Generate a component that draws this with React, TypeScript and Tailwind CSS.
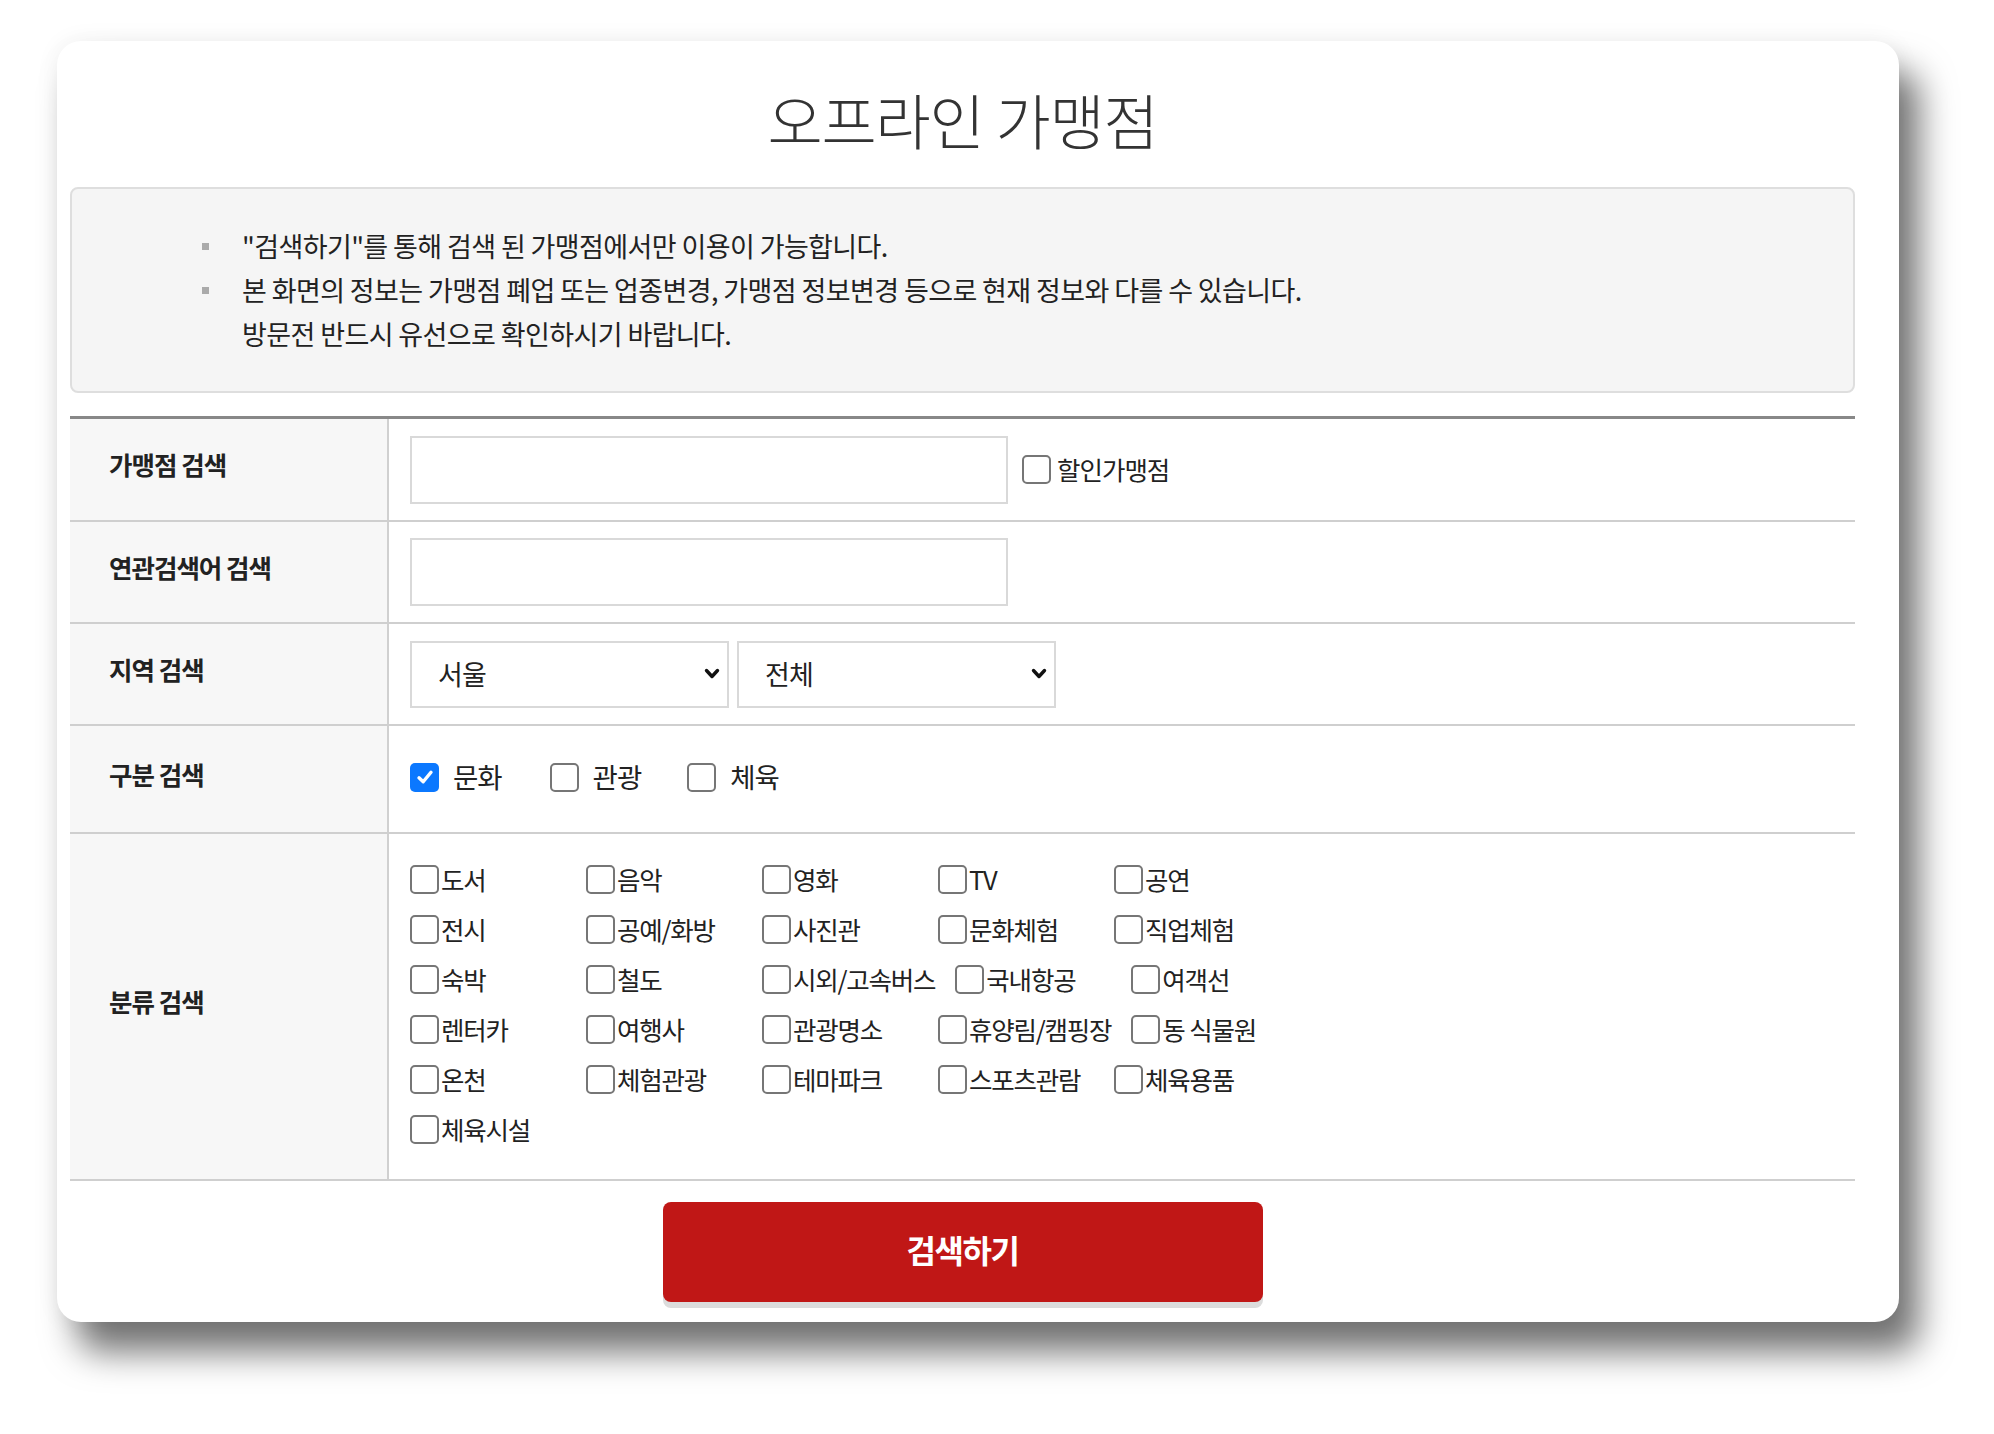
import React from "react";

const FONT = '"Noto Sans CJK KR", "Noto Sans", sans-serif';

function Box({ checked }: { checked?: boolean }) {
  if (checked) {
    return (
      <span className="inline-flex w-[29px] h-[29px] shrink-0 items-center justify-center rounded-[5px] bg-[#0b78ff]">
        <svg viewBox="0 0 20 20" className="w-[20px] h-[20px]">
          <path d="M4 10.8 L8.2 14.8 L16 5.2" fill="none" stroke="white" strokeWidth="3.4" strokeLinecap="round" strokeLinejoin="round" />
        </svg>
      </span>
    );
  }
  return <span className="inline-block w-[29px] h-[29px] shrink-0 rounded-[5px] border-2 border-[#767676] bg-white" />;
}

function Chevron() {
  return (
    <svg viewBox="0 0 16 12" className="w-[16px] h-[12px]">
      <path d="M2.5 2.5 L8 8.5 L13.5 2.5" fill="none" stroke="#111" strokeWidth="3.4" strokeLinecap="round" strokeLinejoin="round" />
    </svg>
  );
}

function Select({ value }: { value: string }) {
  return (
    <div className="w-[319px] h-[67px] border-2 border-[#d9d9d9] bg-white flex items-center justify-between pl-[26px] pr-[7px]">
      <span className="text-[27px] text-[#222] tracking-[-0.8px]">{value}</span>
      <Chevron />
    </div>
  );
}

function Label({ children }: { children: React.ReactNode }) {
  return (
    <div className="w-[319px] shrink-0 bg-[#f7f7f7] border-r-2 border-[#d0d0d0] flex items-center pl-[39px] pb-[10px]">
      <span className="text-[25.5px] font-bold text-[#222] tracking-[-1px]">{children}</span>
    </div>
  );
}

const grid: string[][] = [
  ["도서", "음악", "영화", "TV", "공연"],
  ["전시", "공예/화방", "사진관", "문화체험", "직업체험"],
  ["숙박", "철도", "시외/고속버스", "국내항공", "여객선"],
  ["렌터카", "여행사", "관광명소", "휴양림/캠핑장", "동 식물원"],
  ["온천", "체험관광", "테마파크", "스포츠관람", "체육용품"],
  ["체육시설"],
];

export default function App() {
  return (
    <div className="min-h-screen bg-white pt-[41px] pl-[57px] pb-[100px]" style={{ fontFamily: FONT }}>
      <div className="w-[1842px] bg-white rounded-[24px] pl-[13px] pr-[44px] pb-[20px] shadow-[20px_30px_35px_rgba(0,0,0,0.55),0_0_25px_rgba(0,0,0,0.06)]">
        <div className="h-[146px] flex items-center justify-center pt-[10px]">
          <h1 className="text-[60px] font-light text-[#333] tracking-[-1.2px] leading-none">오프라인 가맹점</h1>
        </div>

        <div className="h-[206px] bg-[#f5f5f5] border-2 border-[#dedede] rounded-[8px] flex flex-col justify-center pl-[130px]">
          <div className="flex items-center h-[44px]">
            <span className="w-[7px] h-[7px] bg-[#aaaaaa] mr-[33px]" />
            <span className="text-[27px] text-[#222] tracking-[-0.6px]">"검색하기"를 통해 검색 된 가맹점에서만 이용이 가능합니다.</span>
          </div>
          <div className="flex items-center h-[44px]">
            <span className="w-[7px] h-[7px] bg-[#aaaaaa] mr-[33px]" />
            <span className="text-[27px] text-[#222] tracking-[-0.6px]">본 화면의 정보는 가맹점 폐업 또는 업종변경, 가맹점 정보변경 등으로 현재 정보와 다를 수 있습니다.</span>
          </div>
          <div className="flex items-center h-[44px] pl-[40px]">
            <span className="text-[27px] text-[#222] tracking-[-0.6px]">방문전 반드시 유선으로 확인하시기 바랍니다.</span>
          </div>
        </div>

        <div className="mt-[23px] border-t-[3px] border-[#888]">
          <div className="flex h-[103px] border-b-2 border-[#cfcfcf]">
            <Label>가맹점 검색</Label>
            <div className="flex-1 flex items-center pl-[21px]">
              <div className="w-[598px] h-[68px] border-2 border-[#d9d9d9] bg-white" />
              <div className="ml-[14px] flex items-center">
                <Box />
                <span className="ml-[6px] text-[25.5px] text-[#222] tracking-[-1px]">할인가맹점</span>
              </div>
            </div>
          </div>

          <div className="flex h-[102px] border-b-2 border-[#cfcfcf]">
            <Label>연관검색어 검색</Label>
            <div className="flex-1 flex items-center pl-[21px]">
              <div className="w-[598px] h-[68px] border-2 border-[#d9d9d9] bg-white" />
            </div>
          </div>

          <div className="flex h-[102px] border-b-2 border-[#cfcfcf]">
            <Label>지역 검색</Label>
            <div className="flex-1 flex items-center pl-[21px] gap-[8px]">
              <Select value="서울" />
              <Select value="전체" />
            </div>
          </div>

          <div className="flex h-[108px] border-b-2 border-[#cfcfcf]">
            <Label>구분 검색</Label>
            <div className="flex-1 flex items-center pl-[21px] pb-[4px]">
              <div className="flex items-center">
                <Box checked />
                <span className="ml-[14px] text-[27.5px] text-[#222] tracking-[-1px]">문화</span>
              </div>
              <div className="flex items-center ml-[48px]">
                <Box />
                <span className="ml-[14px] text-[27.5px] text-[#222] tracking-[-1px]">관광</span>
              </div>
              <div className="flex items-center ml-[46px]">
                <Box />
                <span className="ml-[14px] text-[27.5px] text-[#222] tracking-[-1px]">체육</span>
              </div>
            </div>
          </div>

          <div className="flex border-b-2 border-[#cfcfcf]">
            <Label>분류 검색</Label>
            <div className="flex-1 flex flex-col pl-[21px] pt-[20px] pb-[25px]">
              {grid.map((row, i) => (
                <div key={i} className="flex h-[50px] items-center">
                  {row.map((item) => (
                    <div key={item} className="flex items-center min-w-[156px] mr-[20px]">
                      <Box />
                      <span className="ml-[2px] text-[25.5px] text-[#222] tracking-[-1.2px]">{item}</span>
                    </div>
                  ))}
                </div>
              ))}
            </div>
          </div>
        </div>

        <div className="flex justify-center mt-[21px]">
          <button className="w-[600px] h-[100px] rounded-[8px] bg-[#c01716] shadow-[0_6px_0_#dcdcdc] flex items-center justify-center pb-[6px]">
            <span className="text-[32px] font-bold text-white tracking-[-1.5px]">검색하기</span>
          </button>
        </div>
      </div>
    </div>
  );
}
